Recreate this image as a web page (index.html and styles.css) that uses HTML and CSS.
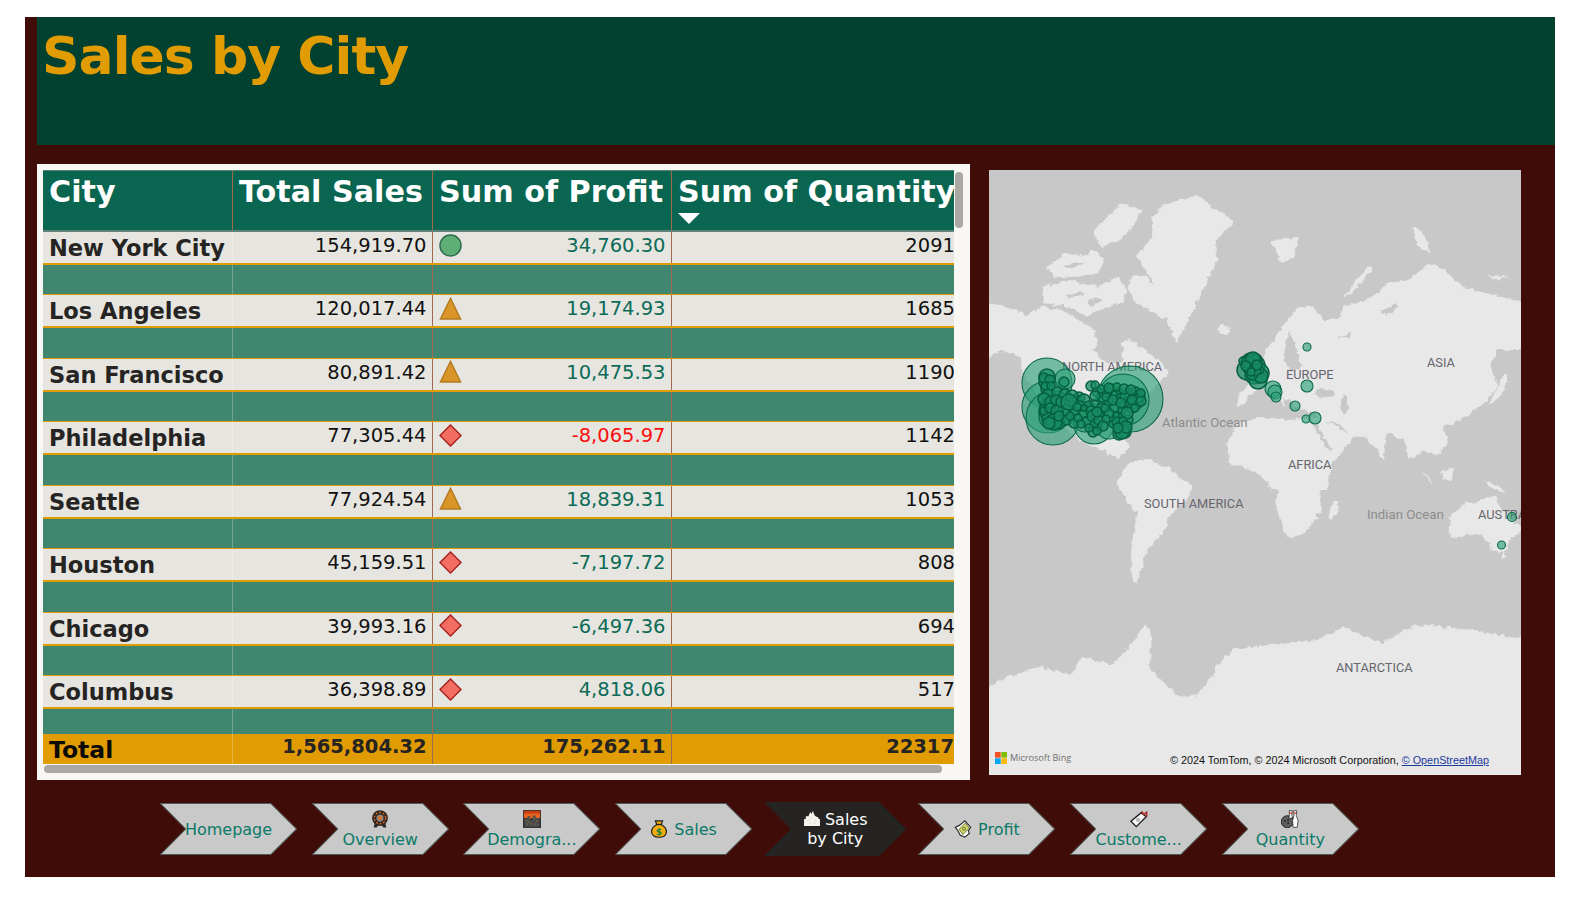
FILE: index.html
```html
<!DOCTYPE html>
<html lang="en">
<head>
<meta charset="utf-8">
<title>Sales by City</title>
<link rel="stylesheet" href="styles.css">
</head>
<body>
<main class="panel">
  <header class="banner"><h1>Sales by City</h1></header>
  <section class="content">
    <div class="card">
      <div class="table">
        <div class="row head"><div class="cell">City</div><div class="cell">Total Sales</div><div class="cell">Sum of Profit</div><div class="cell">Sum of Quantity<i class="sort"></i></div></div>
        <div class="row data"><div class="cell city">New York City</div><div class="cell num">154,919.70</div><div class="cell profit"><svg class="kpi" viewBox="0 0 24 24"><circle class="k-good" cx="12" cy="12" r="11"/></svg><span>34,760.30</span></div><div class="cell num">2091</div></div>
        <div class="row band"><div class="cell"></div><div class="cell"></div><div class="cell"></div><div class="cell"></div></div>
        <div class="row data"><div class="cell city">Los Angeles</div><div class="cell num">120,017.44</div><div class="cell profit"><svg class="kpi" viewBox="0 0 24 24"><path class="k-mid" d="M12 1.500 22.500 23H1.500Z"/></svg><span>19,174.93</span></div><div class="cell num">1685</div></div>
        <div class="row band"><div class="cell"></div><div class="cell"></div><div class="cell"></div><div class="cell"></div></div>
        <div class="row data"><div class="cell city">San Francisco</div><div class="cell num">80,891.42</div><div class="cell profit"><svg class="kpi" viewBox="0 0 24 24"><path class="k-mid" d="M12 1.500 22.500 23H1.500Z"/></svg><span>10,475.53</span></div><div class="cell num">1190</div></div>
        <div class="row band"><div class="cell"></div><div class="cell"></div><div class="cell"></div><div class="cell"></div></div>
        <div class="row data"><div class="cell city">Philadelphia</div><div class="cell num">77,305.44</div><div class="cell profit"><svg class="kpi" viewBox="0 0 24 24"><path class="k-bad" d="M12 1 23 12 12 23 1 12Z"/></svg><span class="neg">-8,065.97</span></div><div class="cell num">1142</div></div>
        <div class="row band"><div class="cell"></div><div class="cell"></div><div class="cell"></div><div class="cell"></div></div>
        <div class="row data"><div class="cell city">Seattle</div><div class="cell num">77,924.54</div><div class="cell profit"><svg class="kpi" viewBox="0 0 24 24"><path class="k-mid" d="M12 1.500 22.500 23H1.500Z"/></svg><span>18,839.31</span></div><div class="cell num">1053</div></div>
        <div class="row band"><div class="cell"></div><div class="cell"></div><div class="cell"></div><div class="cell"></div></div>
        <div class="row data"><div class="cell city">Houston</div><div class="cell num">45,159.51</div><div class="cell profit"><svg class="kpi" viewBox="0 0 24 24"><path class="k-bad" d="M12 1 23 12 12 23 1 12Z"/></svg><span>-7,197.72</span></div><div class="cell num">808</div></div>
        <div class="row band"><div class="cell"></div><div class="cell"></div><div class="cell"></div><div class="cell"></div></div>
        <div class="row data"><div class="cell city">Chicago</div><div class="cell num">39,993.16</div><div class="cell profit"><svg class="kpi" viewBox="0 0 24 24"><path class="k-bad" d="M12 1 23 12 12 23 1 12Z"/></svg><span>-6,497.36</span></div><div class="cell num">694</div></div>
        <div class="row band"><div class="cell"></div><div class="cell"></div><div class="cell"></div><div class="cell"></div></div>
        <div class="row data"><div class="cell city">Columbus</div><div class="cell num">36,398.89</div><div class="cell profit"><svg class="kpi" viewBox="0 0 24 24"><path class="k-bad" d="M12 1 23 12 12 23 1 12Z"/></svg><span>4,818.06</span></div><div class="cell num">517</div></div>
        <div class="row band last"><div class="cell"></div><div class="cell"></div><div class="cell"></div><div class="cell"></div></div>
        <div class="row total"><div class="cell city">Total</div><div class="cell num">1,565,804.32</div><div class="cell num">175,262.11</div><div class="cell num">22317</div></div>
      </div>
      <div class="vbar"></div>
      <div class="hbar"></div>
    </div>

    <div class="map">
      <svg class="map-svg" viewBox="0 0 532 605">
        <defs>
          <filter id="rough" x="-5%" y="-5%" width="110%" height="110%">
            <feTurbulence type="fractalNoise" baseFrequency="0.17" numOctaves="3" seed="4"/>
            <feDisplacementMap in="SourceGraphic" scale="6" xChannelSelector="R" yChannelSelector="G"/>
            <feGaussianBlur stdDeviation=".35"/>
          </filter>
        </defs>
        <rect width="532" height="605" fill="#c8c8c8"/>
        <g filter="url(#rough)">
          <g class="land" transform="translate(-9 -10) scale(.35714 .33333)">
            <path d="M15 430 60 435 100 450 130 465 175 440 230 450 280 480 310 500 330 540 320 570 340 600 400 610 400 545 420 540 460 570 510 610 530 640 490 680 470 720 430 770 420 810 400 830 420 860 385 900 360 880 320 860 280 840 230 800 170 720 120 640 110 590 60 570 15 600Z"/>
            <path d="M385 960 420 905 480 895 530 940 530 980 385 980Z"/>
            <path d="M430 345 465 352 530 430 545 480 500 470 440 430 410 380Z"/>
            <path d="M315 215 395 130 455 150 430 195 395 240 340 262Z"/>
            <path d="M185 325 240 280 290 290 320 270 350 300 330 340 270 350 210 350Z"/>
            <path d="M175 380 250 360 330 380 390 350 410 390 400 430 350 440 300 470 250 440 180 430Z"/>
            <path d="M482 170 520 130 610 105 650 140 710 185 660 240 665 300 620 400 550 550 525 480 475 350 440 290 482 230Z"/>
            <ellipse cx="683" cy="510" rx="19" ry="13"/>
            <path d="M815 240 890 235 880 290 845 310Z"/>
            <path d="M1020 410 1085 320 1100 325 1040 400Z"/>
            <path d="M1210 205 1235 210 1262 280 1225 260Z"/>
            <path d="M1420 345 1480 350 1450 360Z"/>
            <path d="M730 620 770 600 790 650 770 680 745 660Z"/>
            <path d="M1470 640 1482 650 1450 720 1425 735 1440 700Z"/>
            <path d="M800 570 840 510 890 440 930 440 960 480 1000 480 1020 440 1080 420 1110 400 1140 370 1200 360 1260 310 1300 330 1350 380 1420 400 1530 430 1530 570 1450 570 1430 620 1450 680 1400 740 1330 790 1300 800 1310 850 1280 890 1240 870 1200 900 1190 840 1140 820 1130 900 1080 830 1040 830 1000 790 950 780 940 760 880 740 870 720 850 715 860 745 830 715 790 680 765 700 720 745 725 700 770 660 790 610Z"/>
            <path d="M690 850 720 790 780 770 860 780 950 775 1000 800 1045 830 1010 880 970 930 975 990 820 990 780 940 700 910Z"/>
          </g>
          <g class="land" transform="translate(-9 300) scale(.3827 .33333)">
            <path d="M360 30 380 -10 490 -10 560 50 540 90 500 130 480 190 450 220 430 260 410 340 420 350 395 330 395 230 410 130 370 70Z"/>
            <path d="M760 -10 925 -10 890 60 890 120 860 180 830 200 800 200 770 100 790 30Z"/>
            <path d="M935 90 940 110 920 150 910 140 918 105Z"/>
            <path d="M1225 140 1270 100 1300 95 1345 75 1365 120 1420 180 1385 210 1370 250 1340 240 1310 190 1230 205Z"/>
            <ellipse cx="1368" cy="258" rx="7" ry="6"/>
            <path d="M1150 -5 1190 50 1170 30Z"/>
            <path d="M1205 5 1240 -5 1230 30 1210 30Z"/>
            <path d="M1320 30 1380 65 1340 60Z"/>
            <path d="M15 660 60 625 150 590 240 615 265 560 350 585 400 515 430 465 445 480 445 600 480 640 520 680 560 680 600 630 630 570 670 535 760 525 880 510 950 470 1050 520 1140 465 1290 480 1430 510 1430 930 15 930Z"/>
          </g>
          <g class="sea" transform="translate(-9 -10) scale(.35714 .33333)">
            <path d="M340 565 395 555 398 610 350 605Z"/>
            <path d="M865 510 885 560 900 620 870 640 850 590Z"/>
            <ellipse cx="965" cy="700" rx="28" ry="13"/>
            <ellipse cx="1020" cy="735" rx="10" ry="28"/>
            <path d="M940 785 985 870 975 875 930 790Z"/>
            <path d="M290 355 330 362 325 372 295 368ZM345 345 385 300 395 305 360 350ZM240 405 290 395 292 405 245 415ZM300 420 335 410 340 425 310 440ZM365 250 420 235 410 245 375 262ZM400 345 430 330 425 350ZM230 315 290 305 285 315 240 325ZM1000 530 1040 520 1035 535ZM1120 450 1165 430 1170 445 1130 465Z"/>
          </g>
        </g>
        <g class="labels">
          <text x="73" y="201">NORTH AMERICA</text>
          <text x="297" y="209">EUROPE</text>
          <text x="438" y="197">ASIA</text>
          <text x="299" y="299">AFRICA</text>
          <text x="155" y="338">SOUTH AMERICA</text>
          <text x="489" y="349">AUSTRALIA</text>
          <text x="347" y="502">ANTARCTICA</text>
          <text class="ocean" x="173" y="257">Atlantic Ocean</text>
          <text class="ocean" x="378" y="349">Indian Ocean</text>
        </g>
        <g class="dots">
          <circle cx="58" cy="213" r="25"/><circle cx="59" cy="237" r="26"/><circle cx="64" cy="248" r="27"/>
          <circle cx="141" cy="229" r="33"/><circle cx="134" cy="230" r="26"/><circle cx="105" cy="254" r="20"/><circle cx="65" cy="243" r="15"/><circle cx="62" cy="247" r="12"/><circle cx="76" cy="209" r="10"/><circle cx="120" cy="255" r="14"/><circle cx="96" cy="250" r="12"/>
        </g>
        <g class="dots small">
          <circle cx="58" cy="207" r="8"/><circle cx="57" cy="212" r="7"/><circle cx="58" cy="219" r="6"/><circle cx="60" cy="226" r="7"/><circle cx="56" cy="235" r="5"/><circle cx="58" cy="241" r="8"/><circle cx="63" cy="246" r="9"/><circle cx="66" cy="250" r="7"/><circle cx="59" cy="248" r="6"/><circle cx="70" cy="253" r="6"/><circle cx="68" cy="222" r="5"/><circle cx="75" cy="212" r="5"/><circle cx="76" cy="225" r="6"/><circle cx="76" cy="240" r="6"/><circle cx="78" cy="250" r="5"/><circle cx="85" cy="253" r="5"/><circle cx="87" cy="232" r="7"/><circle cx="90" cy="228" r="6"/><circle cx="86" cy="241" r="5"/><circle cx="95" cy="230" r="6"/><circle cx="95" cy="243" r="5"/><circle cx="99" cy="252" r="6"/>
          <circle cx="55" cy="208" r="5"/><circle cx="61" cy="210" r="5"/><circle cx="56" cy="216" r="4"/><circle cx="62" cy="216" r="4"/><circle cx="55" cy="229" r="6"/><circle cx="62" cy="232" r="6"/><circle cx="67" cy="230" r="5"/><circle cx="55" cy="241" r="4"/><circle cx="61" cy="238" r="5"/><circle cx="68" cy="241" r="6"/><circle cx="65" cy="252" r="8"/><circle cx="60" cy="253" r="6"/><circle cx="70" cy="246" r="5"/><circle cx="72" cy="232" r="5"/><circle cx="83" cy="226" r="6"/><circle cx="81" cy="246" r="4"/><circle cx="91" cy="236" r="5"/><circle cx="89" cy="248" r="4"/><circle cx="100" cy="236" r="5"/><circle cx="92" cy="254" r="4"/>
          <circle cx="102" cy="216" r="5"/><circle cx="108" cy="222" r="5"/><circle cx="106" cy="233" r="4"/><circle cx="102" cy="241" r="5"/><circle cx="104" cy="246" r="6"/><circle cx="107" cy="255" r="6"/><circle cx="104" cy="262" r="5"/><circle cx="110" cy="250" r="5"/><circle cx="113" cy="227" r="5"/><circle cx="113" cy="238" r="5"/><circle cx="118" cy="222" r="5"/><circle cx="120" cy="232" r="4"/><circle cx="120" cy="243" r="5"/><circle cx="124" cy="254" r="4"/><circle cx="126" cy="225" r="4"/><circle cx="126" cy="237" r="5"/><circle cx="130" cy="247" r="5"/><circle cx="132" cy="228" r="5"/><circle cx="133" cy="240" r="4"/><circle cx="133" cy="258" r="8"/><circle cx="130" cy="264" r="6"/><circle cx="136" cy="262" r="6"/><circle cx="139" cy="223" r="5"/><circle cx="140" cy="233" r="5"/><circle cx="139" cy="250" r="5"/><circle cx="133" cy="255" r="5"/><circle cx="145" cy="225" r="5"/><circle cx="147" cy="232" r="7"/><circle cx="150" cy="226" r="6"/><circle cx="149" cy="228" r="5"/><circle cx="143" cy="238" r="5"/><circle cx="112" cy="219" r="4"/><circle cx="122" cy="218" r="4"/><circle cx="130" cy="221" r="3"/><circle cx="95" cy="238" r="3"/><circle cx="80" cy="232" r="8"/><circle cx="88" cy="237" r="4"/><circle cx="117" cy="249" r="4"/><circle cx="127" cy="245" r="3"/><circle cx="112" cy="244" r="3"/><circle cx="147" cy="221" r="4"/>
          <circle cx="106" cy="226" r="5"/><circle cx="117" cy="227" r="4"/><circle cx="124" cy="230" r="5"/><circle cx="136" cy="227" r="5"/><circle cx="143" cy="230" r="5"/><circle cx="152" cy="231" r="5"/><circle cx="146" cy="238" r="4"/><circle cx="138" cy="243" r="6"/><circle cx="132" cy="233" r="5"/><circle cx="128" cy="252" r="5"/><circle cx="116" cy="238" r="4"/><circle cx="108" cy="242" r="5"/><circle cx="114" cy="256" r="5"/><circle cx="108" cy="261" r="4"/><circle cx="100" cy="258" r="4"/><circle cx="134" cy="251" r="4"/><circle cx="133" cy="262" r="7"/><circle cx="137" cy="257" r="6"/><circle cx="129" cy="258" r="5"/><circle cx="120" cy="218" r="5"/><circle cx="128" cy="217" r="4"/><circle cx="135" cy="219" r="5"/><circle cx="142" cy="220" r="5"/><circle cx="152" cy="223" r="4"/><circle cx="106" cy="215" r="4"/>
          <circle cx="262" cy="193" r="10"/><circle cx="265" cy="196" r="11"/><circle cx="258" cy="200" r="10"/><circle cx="270" cy="203" r="10"/><circle cx="265" cy="205" r="9"/><circle cx="269" cy="210" r="9"/><circle cx="272" cy="206" r="7"/><circle cx="260" cy="198" r="6"/><circle cx="254" cy="191" r="4"/><circle cx="263" cy="205" r="5"/><circle cx="271" cy="200" r="4"/><circle cx="267" cy="190" r="6"/><circle cx="259" cy="192" r="6"/><circle cx="264" cy="189" r="7"/><circle cx="257" cy="196" r="5"/><circle cx="266" cy="200" r="6"/><circle cx="262" cy="202" r="4"/><circle cx="268" cy="195" r="5"/>
        </g>
        <g class="dots">
          <circle cx="284" cy="219" r="8"/><circle cx="286" cy="222" r="7"/><circle cx="287" cy="227" r="5"/>
          <circle cx="318" cy="177" r="4"/><circle cx="318" cy="216" r="6"/><circle cx="306" cy="236" r="5"/><circle cx="317" cy="249" r="4"/><circle cx="326" cy="248" r="6"/>
          <circle cx="523" cy="347" r="4.500"/><circle cx="512.500" cy="375" r="4"/>
        </g>
      </svg>
      <div class="bing"><svg class="ms" viewBox="0 0 12 12"><rect width="5.700" height="5.700" fill="#f35325"/><rect x="6.300" width="5.700" height="5.700" fill="#81bc06"/><rect y="6.300" width="5.700" height="5.700" fill="#05a6f0"/><rect x="6.300" y="6.300" width="5.700" height="5.700" fill="#ffba08"/></svg><span>Microsoft Bing</span></div>
      <div class="credit">© 2024 TomTom, © 2024 Microsoft Corporation, <a href="#">© OpenStreetMap</a></div>
    </div>
  </section>

  <nav class="nav">
    <a class="chev" href="#"><svg class="shape" viewBox="0 0 136 52" preserveAspectRatio="none"><path d="M.5.5H110L135.500 26 110 51.500H.5L25.500 26Z"/></svg><span class="label">Homepage</span></a>
    <a class="chev stack" href="#"><svg class="shape" viewBox="0 0 136 52" preserveAspectRatio="none"><path d="M.5.5H110L135.500 26 110 51.500H.5L25.500 26Z"/></svg><span class="label"><svg class="ico" viewBox="0 0 20 20"><path d="M4 15 3 19.500H6.500L8 16ZM16 15 17 19.500H13.500L12 16Z" fill="#2a2a2a"/><circle cx="10" cy="9" r="8.800" fill="#2b2422"/><circle cx="10" cy="9" r="6.300" fill="none" stroke="#d9691f" stroke-width="1.600" stroke-dasharray="2.200 1.800"/><circle cx="10" cy="9" r="4" fill="#8c8680"/><circle cx="10" cy="9" r="2.300" fill="#e2742a"/></svg>Overview</span></a>
    <a class="chev stack" href="#"><svg class="shape" viewBox="0 0 136 52" preserveAspectRatio="none"><path d="M.5.5H110L135.500 26 110 51.500H.5L25.500 26Z"/></svg><span class="label"><svg class="ico" viewBox="0 0 20 20"><rect width="20" height="20" fill="#333"/><rect x="1" y="1" width="18" height="8" fill="#e8641e"/><rect x="1" y="1" width="18" height="3" fill="#c9400f"/><path d="M2 19V10H5V7H8V11H11V6H14V9H18V19Z" fill="#4c4a48"/><path d="M3 11h1v1H3zM6 13h1v1H6zM9 15h1v1H9zM12 9h1v1h-1zM15 12h1v1h-1zM4 15h1v1H4zM13 15h1v1h-1zM7 9h1v1H7zM16 16h1v1h-1z" fill="#b9965e"/></svg>Demogra...</span></a>
    <a class="chev inline" href="#"><svg class="shape" viewBox="0 0 136 52" preserveAspectRatio="none"><path d="M.5.5H110L135.500 26 110 51.500H.5L25.500 26Z"/></svg><span class="label"><svg class="ico" viewBox="0 0 18 20"><path d="M5 1H13L11.500 5C15 7 17.200 10 17.200 13 17.200 17 14 19.200 9 19.200 4 19.200 .8 17 .8 13 .8 10 3 7 6.500 5Z" fill="#f2ae0f" stroke="#1c1c1c" stroke-width="1.300"/><path d="M6 5H12" stroke="#1c1c1c" stroke-width="1.500"/><text class="dollar" x="9" y="16.500">$</text></svg>Sales</span></a>
    <a class="chev active" href="#"><svg class="shape" viewBox="0 0 136 52" preserveAspectRatio="none"><path d="M.5.5H110L135.500 26 110 51.500H.5L25.500 26Z"/></svg><span class="label"><svg class="ico ico-inl" viewBox="0 0 20 17"><path d="M1 17V9H3V6H6L8 1 9.500 3.500 11 0 13 5 15 6.500 17 7 17.500 9H19V17Z" fill="#f6f3ea"/><path d="M4 11h2M8 8h2M13 11h2M7 14h2M12 14h2" stroke="#c9d4dc"/></svg>Sales<br>by City</span></a>
    <a class="chev inline" href="#"><svg class="shape" viewBox="0 0 136 52" preserveAspectRatio="none"><path d="M.5.5H110L135.500 26 110 51.500H.5L25.500 26Z"/></svg><span class="label"><svg class="ico" viewBox="0 0 20 20"><path d="M1.500 8 6 6 12 1 18.500 8 16 12 17 15 12 19 7 17 5 13Z" fill="#fff" stroke="#2a2a2a" stroke-width="1.300"/><path d="M5.500 10.500 12.500 3.500 17 9 10 16Z" fill="#d3d66a" stroke="#5c6a2a"/><circle cx="11.200" cy="9.700" r="1.700" fill="none" stroke="#5c6a2a"/></svg>Profit</span></a>
    <a class="chev stack" href="#"><svg class="shape" viewBox="0 0 136 52" preserveAspectRatio="none"><path d="M.5.5H110L135.500 26 110 51.500H.5L25.500 26Z"/></svg><span class="label"><svg class="ico" viewBox="0 0 20 20"><path d="M1 12.500 12.500 3 18 7.500 7 18.500Z" fill="#f6f6f6" stroke="#1d1d1d" stroke-width="1.500"/><circle cx="9" cy="11" r="2.400" fill="#b9b9b9"/><path d="M13 1.500 15 5 18.500 2.500V7.500" fill="none" stroke="#b02020" stroke-width="1.700"/></svg>Custome...</span></a>
    <a class="chev stack" href="#"><svg class="shape" viewBox="0 0 136 52" preserveAspectRatio="none"><path d="M.5.5H110L135.500 26 110 51.500H.5L25.500 26Z"/></svg><span class="label"><svg class="ico" viewBox="0 0 20 20"><circle cx="7" cy="13" r="6.700" fill="#5f5f5f" stroke="#1f1f1f"/><circle cx="4.500" cy="12" r="1" fill="#1f1f1f"/><circle cx="8" cy="11" r="1" fill="#1f1f1f"/><circle cx="8" cy="14.500" r="1" fill="#1f1f1f"/><path d="M9 .8H12.500L12 6 13 9H8.500L9.500 6Z" fill="#fff" stroke="#1f1f1f" stroke-width=".8"/><path d="M14 .8H17.500L17 6 19 12 18 19.300H13.500L12.800 12 14.500 6Z" fill="#fff" stroke="#1f1f1f" stroke-width=".8"/><path d="M9.200 3.500H12.300M14.300 3.500H17.300" stroke="#d5331f" stroke-width="1.500"/></svg>Quantity</span></a>
  </nav>
</main>
</body>
</html>
```
FILE: styles.css
```css
* { box-sizing: border-box; }
html, body { margin: 0; background: #fff; }
body { padding: 17px 26px 28px 25px; font-family: "DejaVu Sans", Verdana, sans-serif; }

.panel { background: #400c07; padding-left: 12px; height: 860px; }

.banner { background: #024030; height: 128px; padding: 7px 0 0 5px; }
.banner h1 { margin: 0; font-size: 52px; line-height: 64px; font-weight: 700; letter-spacing: -0.950px; color: #e29c03; }

.content { display: flex; align-items: flex-start; margin-top: 19px; }

.card { position: relative; width: 933px; height: 616px; background: #f8f7f3; padding: 6px 16px 0 6px; }
.table { width: 911px; overflow: hidden; }

.row { display: grid; grid-template-columns: 190px 200px 239px 282px; }
.cell { border-right: 1px solid #a06a50; overflow: hidden; white-space: nowrap; padding: 0 5.500px 0 6px; }
.cell:first-child { border-right-color: rgba(255,255,255,.25); }
.cell:last-child { border-right: 0; padding-right: 0; }

.head { height: 62px; background: #0a6650; border-top: 1px solid #5f8378; border-bottom: 2px solid #5f8378; color: #fff; font-weight: 700; font-size: 30.200px; line-height: 42px; }
.head .cell { padding-right: 0; }
.head .cell:first-child { border-right-color: #a06a50; }
.sort { display: block; width: 0; height: 0; border: 11px solid transparent; border-top: 11px solid #fff; border-bottom: 0; }

.data { height: 33px; background: #e6e5e0; border-bottom: 2.500px solid #e29c03; color: #111; font-size: 19.500px; line-height: 27.500px; }
.data .cell:last-child { margin-right: -1px; }
.band { height: 30.450px; background: #41866f; border-bottom: 1px solid #e29c03; }
.band.last { height: 25px; border-bottom: 0; }

.city { font-weight: 700; font-size: 22.500px; line-height: 33px; color: #252423; }
.num { text-align: right; }
.profit { display: flex; justify-content: space-between; color: #0b6b57; }
.neg { color: #fb0f0f; }

.kpi { width: 23px; height: 23px; margin-top: 1.500px; flex: none; }
.k-good { fill: #5fae75; stroke: #2f6b4e; stroke-width: 1.500; }
.k-mid { fill: #d99527; stroke: #b57a20; stroke-width: 1.500; }
.k-bad { fill: #f36e62; stroke: #a9221e; stroke-width: 1.500; }

.total { height: 29.500px; background: #e29c03; color: #252423; font-size: 19.500px; font-weight: 700; line-height: 26px; }
.total .city { color: #0c0a05; font-size: 23.500px; line-height: 33px; }

.vbar { position: absolute; left: 918px; top: 8px; width: 8px; height: 56px; border-radius: 4px; background: #aaa8a3; }
.hbar { position: absolute; left: 7px; top: 601px; width: 898px; height: 8px; border-radius: 4px; background: #aaa8a3; }

.map { position: relative; width: 532px; height: 605px; margin: 6px 0 0 19px; overflow: hidden; background: #c8c8c8; }
.map-svg { display: block; width: 532px; height: 605px; }
.land { fill: #e8e8e8; }
.sea { fill: #c8c8c8; }
.labels text { font-family: Roboto, sans-serif; font-size: 12.800px; fill: #66666e; }
.labels .ocean { font-size: 13.200px; fill: #8c8c8c; }
.dots circle { fill: rgba(44,160,120,.62); stroke: #0a6b48; stroke-width: 1.100; }
.dots.small circle { fill: rgba(24,140,100,.75); stroke: #05603f; stroke-width: 1.500; }

.bing { position: absolute; left: 6px; bottom: 11px; display: flex; align-items: center; gap: 3px; font-family: "Open Sans", sans-serif; font-size: 9.100px; color: #6f6f6f; }
.ms { width: 12px; height: 12px; }
.credit { position: absolute; left: 181px; bottom: 9px; font-family: "Liberation Sans", sans-serif; font-size: 10.800px; color: #111; white-space: nowrap; }
.credit a { color: #1a3a9c; }

.nav { display: flex; gap: 14.700px; padding: 23px 0 0 123px; }
.chev { position: relative; flex: none; width: 137px; height: 52px; display: flex; align-items: center; justify-content: center; color: #0b7a68; font-size: 16px; line-height: 19px; text-decoration: none; text-align: center; }
.shape { position: absolute; inset: 0; width: 100%; height: 100%; }
.shape path { fill: #c9c9c9; stroke: #505a58; stroke-width: 1; }
.label { position: relative; }
.ico { width: 18px; height: 18px; }
.stack { padding-top: 1px; }
.stack .ico { display: block; margin: 0 auto 2px; }
.inline .label { display: flex; align-items: center; gap: 6px; }
.dollar { font-family: "DejaVu Sans", sans-serif; font-size: 10px; font-weight: 700; fill: #17803a; text-anchor: middle; }
.active { color: #fff; }
.active .shape { left: -2px; top: -1px; width: 141px; height: 54px; }
.active .shape path { fill: #252423; stroke: #252423; }
.ico-inl { width: 18px; height: 15px; margin-right: 4px; vertical-align: -1px; }
```
